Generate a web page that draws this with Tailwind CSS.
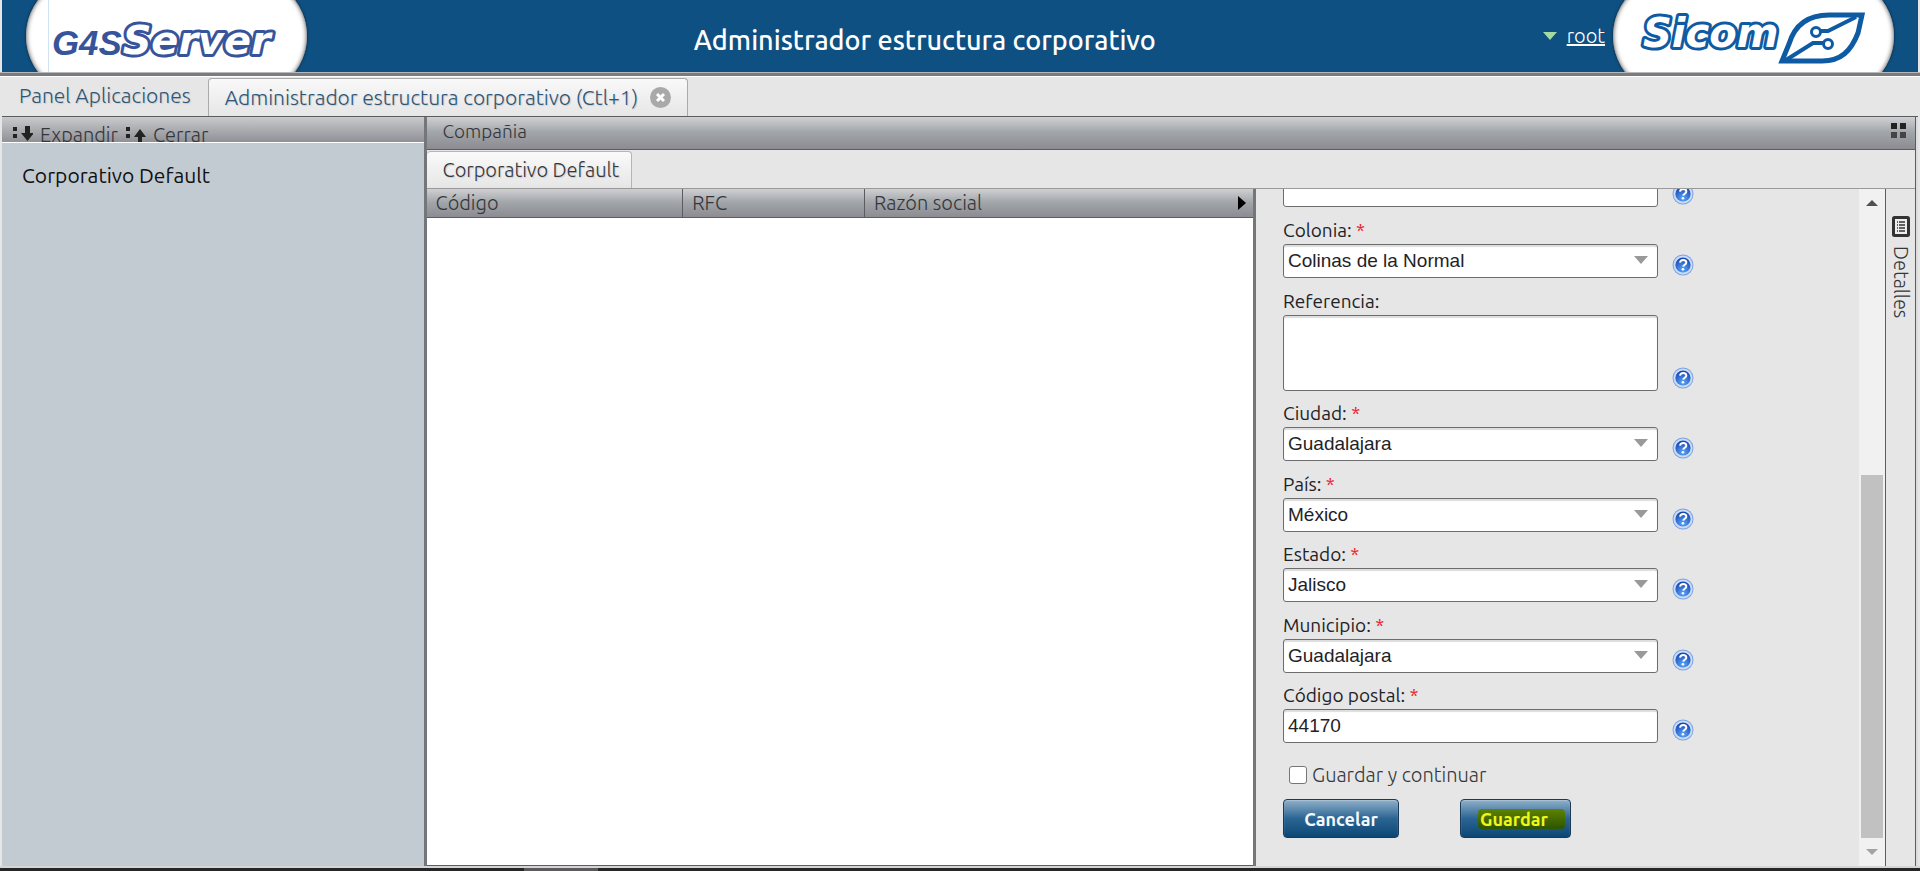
<!DOCTYPE html>
<html lang="es">
<head>
  <meta charset="UTF-8" />
  <meta name="viewport" content="width=device-width, initial-scale=1.0" />
  <script src="https://cdn.jsdelivr.net/npm/@tailwindcss/browser@4"></script>
  <title>Administrador estructura corporativo</title>
</head>
<body class="h-screen flex flex-col overflow-hidden bg-[#e6e6e6] font-['Ubuntu','Open_Sans',sans-serif] text-[#1f2227]">

  <!-- Shared icons -->
  <svg class="absolute w-0 h-0">
    <defs>
      <radialGradient id="help-fill" cx="50%" cy="80%" r="75%">
        <stop offset="0" stop-color="#5aa8f8" />
        <stop offset="1" stop-color="#1a45b4" />
      </radialGradient>
      <symbol id="help" viewBox="0 0 22 22">
        <circle cx="11" cy="11" r="10.5" fill="#7fa3dc" />
        <circle cx="11" cy="11" r="9.5" fill="#c9dcf8" />
        <circle cx="11" cy="11" r="7.6" fill="url(#help-fill)" />
        <path d="M8 8.6c.3-2 1.700-2.700 3.200-2.700 1.900 0 3.100 1 3.100 2.500 0 2.300-2.800 2.300-3.100 4.300" fill="none" stroke="#fff" stroke-width="2" />
        <circle cx="10.900" cy="15.300" r="1.300" fill="#fff" />
      </symbol>
      <symbol id="caret" viewBox="0 0 14 8"><path d="M0 0h14L7 8z" fill="#999" /></symbol>
    </defs>
  </svg>

  <!-- Header -->
  <header class="h-[72px] shrink-0 mx-[2px] bg-[#0e5081] flex items-center overflow-hidden text-white">
    <div class="ml-6 w-[281px] h-[120px] shrink-0 rounded-full bg-white shadow-[inset_0_0_5px_#444,0_0_3px_#123] flex items-center">
      <svg class="ml-[22px] w-[240px] h-[72px] border-l border-[#cfe3f2]" viewBox="0 0 240 72" role="img" aria-label="G4S Server">
        <text x="3" y="55" font-family="Liberation Sans" font-style="italic" font-weight="bold" font-size="35" fill="#37549b">G4S</text>
        <text x="74" y="54" font-family="DejaVu Sans" font-style="italic" font-weight="bold" font-size="40" fill="#fff" stroke="#37549b" stroke-width="6" stroke-linejoin="round" paint-order="stroke">Server</text>
      </svg>
    </div>
    <h1 class="flex-1 text-center text-[27px] leading-8 font-medium mt-2">Administrador estructura corporativo</h1>
    <div class="flex items-center gap-[10px] shrink-0">
      <svg class="w-[14px] h-2" viewBox="0 0 14 8"><path d="M0 0h14L7 8z" fill="#a5dba0" /></svg>
      <a href="#" class="text-[20px] leading-7 font-light underline">root</a>
    </div>
    <div class="ml-2 mr-6 w-[281px] h-[120px] shrink-0 rounded-full bg-white shadow-[inset_0_0_5px_#444,0_0_3px_#123] flex items-center">
      <svg class="ml-[26px] w-[236px] h-[72px]" viewBox="0 0 236 72" role="img" aria-label="Sicom">
        <text x="4" y="47" font-family="DejaVu Sans" font-style="italic" font-weight="bold" font-size="40" fill="#fff" stroke="#0f5ba3" stroke-width="6" stroke-linejoin="round" paint-order="stroke">Sicom</text>
        <path d="M143 61L150 44C156 24 170 15 190 15H223L219 33C212 51 202 61 183 61z" fill="#fff" stroke="#0f5ba3" stroke-width="5" />
        <path d="M181 31H189L217 17M184 43H174L147 60" fill="none" stroke="#0f5ba3" stroke-width="4" />
        <circle cx="177" cy="32" r="4.500" fill="#fff" stroke="#0f5ba3" stroke-width="3" />
        <circle cx="189" cy="44" r="4.500" fill="#fff" stroke="#0f5ba3" stroke-width="3" />
      </svg>
    </div>
  </header>
  <div class="h-1 shrink-0 bg-[#7b7b7d] border-t border-[#b5b9bc]"></div>

  <!-- Application tabs -->
  <nav class="h-10 shrink-0 flex items-end border-t border-white text-[21px] font-light text-[#2c5577] [text-shadow:1px_1px_1px_#ccc]">
    <a href="#" class="pl-[19px] pr-[17px] h-[39px] leading-9">Panel Aplicaciones</a>
    <div class="h-[38px] px-4 flex items-center gap-3 border border-b-0 border-[#aaa] rounded-t bg-linear-to-b from-[#f9f9f9] to-[#e6e6e6]">
      <a href="#">Administrador estructura corporativo (Ctl+1)</a>
      <button aria-label="Cerrar pestaña">
        <svg class="w-[21px] h-[21px] block" viewBox="0 0 21 21"><circle cx="10.500" cy="10.500" r="10.500" fill="#a9a9a9" /><path d="M7 7l7 7M14 7l-7 7" stroke="#fff" stroke-width="3" /></svg>
      </button>
    </div>
  </nav>

  <div class="flex-1 min-h-0 flex mx-[2px] border-t border-[#5c5c60]">

    <!-- Company tree -->
    <aside class="w-[22%] shrink-0 flex flex-col bg-[#c2cad2]">
      <div class="h-[26px] shrink-0 overflow-hidden flex gap-2 pl-[11px] bg-linear-to-b from-[#cacacd] to-[#8f9196] border-b border-white text-[20px] leading-[36px] font-light text-[#33363b]">
        <button class="flex gap-[7px]">
          <svg class="w-5 h-4 mt-[9px]" viewBox="0 0 20 16"><path d="M0 1h4v4H0zM0 8h4v4H0zM12 0h5v7h4l-6.500 8L8 7h4z" fill="#222" /></svg>Expandir
        </button>
        <button class="flex gap-[7px]">
          <svg class="w-5 h-4 mt-[9px]" viewBox="0 0 20 16"><path d="M0 1h4v4H0zM0 8h4v4H0zM14 3l6 8h-4v5h-4v-5H8z" fill="#222" /></svg>Cerrar
        </button>
      </div>
      <a href="#" class="pl-5 pt-4 text-[21px] leading-8 text-[#111]">Corporativo Default</a>
    </aside>
    <div class="w-[3px] shrink-0 bg-[#74777a]"></div>

    <!-- Company panel -->
    <main class="flex-1 min-w-0 flex flex-col">
      <div class="h-[33px] shrink-0 flex items-start justify-between pl-4 pr-2 bg-linear-to-b from-[#d0d0d3] via-[#a0a4a7] to-[#8c8c92] border-b border-[#5c5c60]">
        <h2 class="text-[19px] leading-7 font-light text-[#33363b]">Compañia</h2>
        <button aria-label="Ventanas" class="mt-[6px]">
          <svg class="w-4 h-4 block" viewBox="0 0 16 16"><path d="M0 0h6v6H0zM9 0h6v6H9z" fill="#222" /><path d="M0 9h6v6H0zM9 9h6v6H9z" fill="#444" /></svg>
        </button>
      </div>
      <div class="h-[38px] shrink-0 pt-px flex">
        <a href="#" class="h-[37px] pl-4 pr-3 leading-9 text-[20px] font-light text-[#33363b] border-r border-t border-[#b5b5b5] rounded-t bg-linear-to-b from-[#fafafa] to-[#e6e6e6] [text-shadow:1px_1px_1px_#ccc]">Corporativo Default</a>
      </div>

      <div class="flex-1 min-h-0 flex border-t border-[#999]">
        <section class="flex-1 min-w-0 bg-white border-b border-[#5c5c60]">
          <table class="w-full table-fixed text-[20px] leading-7">
            <thead>
              <tr class="h-7 bg-linear-to-b from-[#d0d0d3] via-[#a0a4a7] to-[#8c8c92] border-b border-[#5c5c60] text-left text-[#33363b]">
                <th class="w-[31%] pl-[9px] py-0 font-light border-r border-[#5c5c60]">Código</th>
                <th class="w-[22%] pl-[9px] py-0 font-light border-r border-[#5c5c60]">RFC</th>
                <th class="pl-[9px] py-0 font-light">
                  <div class="flex items-center justify-between pr-[7px]">Razón social
                    <svg class="w-2 h-[14px]" viewBox="0 0 8 14"><path d="M0 0l8 7-8 7z" fill="#000" /></svg>
                  </div>
                </th>
              </tr>
            </thead>
          </table>
        </section>
        <div class="w-[3px] shrink-0 bg-[#74777a]"></div>

        <!-- Address form: scrolled to the end -->
        <form class="w-[603px] shrink-0 overflow-hidden flex flex-col justify-end pl-[27px] pb-7 text-[19px]">
          <div class="flex items-end gap-[14px]">
            <input type="text" aria-label="Calle" class="w-[375px] h-[34px] px-1 bg-white border border-[#6d6d6d] rounded-[3px]" />
            <svg class="w-[22px] h-[22px] mb-0.5"><use href="#help" /></svg>
          </div>

          <label for="colonia" class="mt-[9px] leading-7">Colonia: <span class="text-[#e8202a]">*</span></label>
          <div class="flex items-end gap-[14px]">
            <div class="relative w-[375px]">
              <select id="colonia" class="w-full h-[34px] px-1 block appearance-none bg-white border border-[#6d6d6d] rounded-[3px] shadow-[inset_0_2px_1px_#ddd] font-['Liberation_Sans',sans-serif] text-[19px]"><option>Colinas de la Normal</option></select>
              <svg class="absolute right-[10px] top-3 w-[14px] h-2 pointer-events-none"><use href="#caret" /></svg>
            </div>
            <svg class="w-[22px] h-[22px] mb-0.5"><use href="#help" /></svg>
          </div>

          <label for="referencia" class="mt-[9px] leading-7">Referencia:</label>
          <div class="flex items-end gap-[14px]">
            <textarea id="referencia" class="w-[375px] h-[76px] px-1 block resize-none bg-white border border-[#6d6d6d] rounded-[3px] shadow-[inset_0_2px_1px_#ddd]"></textarea>
            <svg class="w-[22px] h-[22px] mb-0.5"><use href="#help" /></svg>
          </div>

          <label for="ciudad" class="mt-2 leading-7">Ciudad: <span class="text-[#e8202a]">*</span></label>
          <div class="flex items-end gap-[14px]">
            <div class="relative w-[375px]">
              <select id="ciudad" class="w-full h-[34px] px-1 block appearance-none bg-white border border-[#6d6d6d] rounded-[3px] shadow-[inset_0_2px_1px_#ddd] font-['Liberation_Sans',sans-serif] text-[19px]"><option>Guadalajara</option></select>
              <svg class="absolute right-[10px] top-3 w-[14px] h-2 pointer-events-none"><use href="#caret" /></svg>
            </div>
            <svg class="w-[22px] h-[22px] mb-0.5"><use href="#help" /></svg>
          </div>

          <label for="pais" class="mt-[9px] leading-7">País: <span class="text-[#e8202a]">*</span></label>
          <div class="flex items-end gap-[14px]">
            <div class="relative w-[375px]">
              <select id="pais" class="w-full h-[34px] px-1 block appearance-none bg-white border border-[#6d6d6d] rounded-[3px] shadow-[inset_0_2px_1px_#ddd] font-['Liberation_Sans',sans-serif] text-[19px]"><option>México</option></select>
              <svg class="absolute right-[10px] top-3 w-[14px] h-2 pointer-events-none"><use href="#caret" /></svg>
            </div>
            <svg class="w-[22px] h-[22px] mb-0.5"><use href="#help" /></svg>
          </div>

          <label for="estado" class="mt-2 leading-7">Estado: <span class="text-[#e8202a]">*</span></label>
          <div class="flex items-end gap-[14px]">
            <div class="relative w-[375px]">
              <select id="estado" class="w-full h-[34px] px-1 block appearance-none bg-white border border-[#6d6d6d] rounded-[3px] shadow-[inset_0_2px_1px_#ddd] font-['Liberation_Sans',sans-serif] text-[19px]"><option>Jalisco</option></select>
              <svg class="absolute right-[10px] top-3 w-[14px] h-2 pointer-events-none"><use href="#caret" /></svg>
            </div>
            <svg class="w-[22px] h-[22px] mb-0.5"><use href="#help" /></svg>
          </div>

          <label for="municipio" class="mt-[9px] leading-7">Municipio: <span class="text-[#e8202a]">*</span></label>
          <div class="flex items-end gap-[14px]">
            <div class="relative w-[375px]">
              <select id="municipio" class="w-full h-[34px] px-1 block appearance-none bg-white border border-[#6d6d6d] rounded-[3px] shadow-[inset_0_2px_1px_#ddd] font-['Liberation_Sans',sans-serif] text-[19px]"><option>Guadalajara</option></select>
              <svg class="absolute right-[10px] top-3 w-[14px] h-2 pointer-events-none"><use href="#caret" /></svg>
            </div>
            <svg class="w-[22px] h-[22px] mb-0.5"><use href="#help" /></svg>
          </div>

          <label for="cp" class="mt-2 leading-7">Código postal: <span class="text-[#e8202a]">*</span></label>
          <div class="flex items-end gap-[14px]">
            <input id="cp" type="text" value="44170" class="w-[375px] h-[34px] px-1 bg-white border border-[#6d6d6d] rounded-[3px] shadow-[inset_0_2px_1px_#ddd] font-['Liberation_Sans',sans-serif] text-[19px]" />
            <svg class="w-[22px] h-[22px] mb-0.5"><use href="#help" /></svg>
          </div>

          <label class="mt-[18px] mb-[10px] pl-[6px] flex items-center gap-[5px] leading-7 text-[20px] font-light text-[#33363b]">
            <input type="checkbox" class="w-[18px] h-[18px] appearance-none bg-white border border-[#767676] rounded-[3px]" />
            Guardar y continuar
          </label>
          <div class="flex gap-[61px] text-[18px] leading-5 font-bold">
            <button type="button" class="h-[39px] w-[116px] rounded border border-[#1c3a57] bg-linear-to-b from-[#8fb0c9] via-[#2a6593] to-[#0b4776] text-[#f3f9ff] shadow-[inset_0_1px_1px_#a9c2d6]">Cancelar</button>
            <button type="submit" class="h-[39px] w-[111px] pl-[17px] rounded border border-[#1c3a57] bg-linear-to-b from-[#8fb0c9] via-[#2a6593] to-[#0b4776] text-[#f0f61c] shadow-[inset_0_1px_1px_#a9c2d6] text-left">
              <span class="block w-[87px] pl-[2px] rounded-sm bg-linear-to-b from-[#5f8300] to-[#2c5400]">Guardar</span>
            </button>
          </div>
        </form>

        <!-- Scrollbar -->
        <div class="w-[26px] shrink-0 bg-[#f1f1f1] flex flex-col items-center justify-between pt-[11px] pb-[11px] px-[2px]">
          <svg class="w-3 h-[6px]" viewBox="0 0 12 6"><path d="M0 6L6 0l6 6z" fill="#505050" /></svg>
          <div class="w-full mt-auto mb-[11px] h-[363px] bg-[#c1c1c1]"></div>
          <svg class="w-3 h-[6px]" viewBox="0 0 12 6"><path d="M0 0h12L6 6z" fill="#a3a3a3" /></svg>
        </div>

        <div class="w-[30px] shrink-0 border-l border-[#5c5c60] flex flex-col items-center pt-[27px] gap-[9px]">
          <svg class="w-[18px] h-[21px] shrink-0" viewBox="0 0 18 21"><rect x="1.500" y="1.500" width="15" height="18" rx="1" fill="#eee" stroke="#333" stroke-width="3" /><path d="M5 6h1M7 6h6M5 9h1M7 9h6M5 12h1M7 12h6M5 15h1M7 15h6" stroke="#333" stroke-width="1.300" /></svg>
          <button class="[writing-mode:vertical-rl] text-[20px] leading-6 font-light text-[#33363b]">Detalles</button>
        </div>
      </div>
    </main>
    <div class="w-[3px] shrink-0 border-l border-[#5c5c60] bg-[#ddd]"></div>
  </div>
  <div class="h-[2px] shrink-0 bg-[#d5d5d5]"></div>
  <footer class="h-[3px] shrink-0 bg-[#262626] pl-[524px]"><div class="w-[74px] h-full bg-[#5c5a5c]"></div></footer>

</body>
</html>
